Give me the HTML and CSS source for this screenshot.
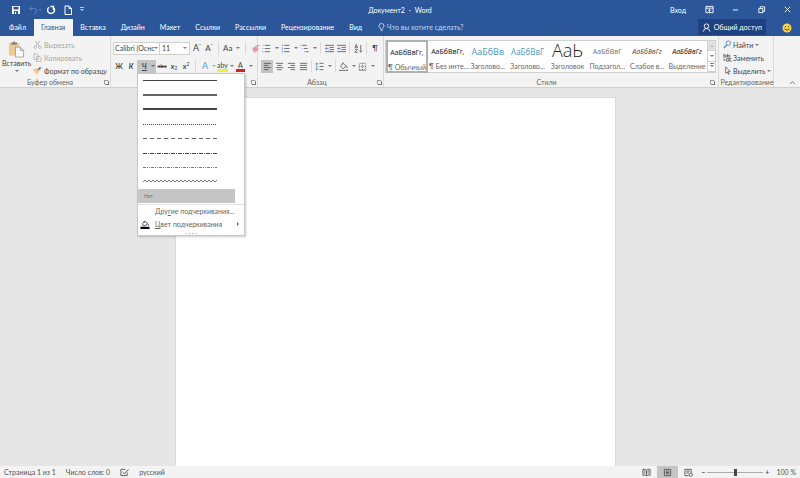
FILE: index.html
```html
<!DOCTYPE html>
<html lang="ru">
<head>
    <meta charset="UTF-8">
    <meta name="viewport" content="width=device-width, initial-scale=1.0">
    <title>Документ2 - Word</title>
    <link rel="stylesheet" href="styles.css">
</head>
<body>
    <header class="titlebar">
        <div class="quick">
            <button aria-label="Сохранить"><svg viewBox="0 0 10 10"><path fill="#fff" stroke="none" d="M1 1h8v8H1z"/><path fill="#2b579a" stroke="none" d="M2.500 1.800h5v2.700h-5zM3 6h4v3H3z"/><path fill="#fff" stroke="none" d="M4 7h1.200v2H4z"/></svg></button>
            <button class="dim" aria-label="Отменить"><svg viewBox="0 0 10 10"><path d="M4 1L1.500 3.500 4 6M1.500 3.500H6q2.500 0 2.500 2.500T6 8.500"/></svg><i class="arrow"></i></button>
            <button aria-label="Повторить"><svg viewBox="0 0 10 10"><path stroke-width="1.400" d="M3 2.200A3.500 3.500 0 1 0 7.500 2.500M7.500 5V1.500H4.500"/></svg></button>
            <button aria-label="Создать"><svg viewBox="0 0 10 10"><path d="M2 1h4l2.500 2.500V9.500H2zM6 1v2.500h2.500"/></svg></button>
            <button aria-label="Настройка панели"><i class="arrow bar"></i></button>
        </div>
        <div class="title">Документ2 &nbsp;- &nbsp;Word</div>
        <div class="window">
            <a href="#">Вход</a>
            <button aria-label="Параметры ленты"><svg viewBox="0 0 10 10"><path d="M1 1.500h8v7H1zM1 3.500h8M5 8V5M3.500 6.300L5 4.800l1.500 1.500"/></svg></button>
            <button aria-label="Свернуть"><svg viewBox="0 0 10 10"><path d="M2 5.500h6"/></svg></button>
            <button aria-label="Восстановить"><svg viewBox="0 0 10 10"><path d="M2 4h4.500v4.500H2zM3.500 4V2H8.500v5H6.500"/></svg></button>
            <button aria-label="Закрыть"><svg viewBox="0 0 10 10"><path d="M2 2l6 6M8 2L2 8"/></svg></button>
        </div>
    </header>

    <nav class="tabs">
        <a href="#">Файл</a>
        <a href="#" class="active">Главная</a>
        <a href="#">Вставка</a>
        <a href="#">Дизайн</a>
        <a href="#">Макет</a>
        <a href="#">Ссылки</a>
        <a href="#">Рассылки</a>
        <a href="#">Рецензирование</a>
        <a href="#">Вид</a>
        <a href="#" class="tell"><svg viewBox="0 0 10 10"><path d="M4 7C4 5.500 2.200 5 2.200 3.300a2.800 2.800 0 0 1 5.600 0C7.800 5 6 5.500 6 7zM4 8.500h2"/></svg>Что вы хотите сделать?</a>
        <button class="share"><svg viewBox="0 0 10 10"><circle cx="5" cy="3.500" r="2.500"/><path d="M1.500 9.500Q2 6 5 6t4 3.500"/></svg>Общий доступ</button>
        <button class="smile" aria-label="Отзыв"><svg viewBox="0 0 10 10"><circle cx="5" cy="5" r="4.500" fill="#fbd04b" stroke="none"/><path stroke="#6b4e12" d="M3.500 3v1.300M6.500 3v1.300M2.500 5.800q2.500 3 5 0"/></svg></button>
    </nav>

    <section class="ribbon">
        <div class="group clipboard">
            <div class="tools">
                <button class="paste"><svg viewBox="0 0 18 18"><path fill="#ecc277" stroke="none" d="M1 2.500h11V16H1z"/><path fill="#666" stroke="none" d="M3.500 2h1.800Q6.500-.5 7.700 2h1.800v2.500h-6z"/><path fill="#fff" stroke="#777" stroke-width=".8" d="M8 7h5l3.500 3.500v7H8zM13 7v3.500h3.500"/></svg>Вставить<i class="arrow"></i></button>
                <div class="stack">
                    <button class="off"><svg viewBox="0 0 10 10"><path d="M2.500 1l4.500 6M7.500 1L3 7"/><circle cx="2.500" cy="8" r="1.400"/><circle cx="7.500" cy="8" r="1.400"/></svg>Вырезать</button>
                    <button class="off"><svg viewBox="0 0 10 10"><path d="M1 1h3.500l1.500 1.500V7H1zM4 4h3.500L9 5.500v4H4z"/></svg>Копировать</button>
                    <button><svg viewBox="0 0 10 10"><path fill="#ecc277" stroke="none" d="M0 4l4-1.500 3 3.500-3 4z"/><path stroke="#555" stroke-width="2" d="M5.500 4.500L8.500 1.500"/></svg>Формат по образцу</button>
                </div>
            </div>
            <div class="caption">Буфер обмена<i class="launch"></i></div>
        </div>

        <div class="group font">
            <div class="tools rows">
                <div class="row">
                    <button class="combo name">Calibri (Оснс<i class="arrow"></i></button>
                    <button class="combo size">11<i class="arrow"></i></button>
                    <button class="tool letter">A<sup>ˆ</sup></button>
                    <button class="tool letter small">A<sup>ˇ</sup></button>
                    <i class="sep"></i>
                    <button class="split case">Aa<i class="arrow"></i></button>
                    <i class="sep"></i>
                    <button class="tool" aria-label="Очистить формат"><svg viewBox="0 0 10 10"><path fill="#e58f9b" stroke="none" d="M1 6l4-4 4 3-4 4.500H3.500z"/><path stroke="#a66" d="M3 4l3.500 3.500M6 1l1.500 2L9 1"/></svg></button>
                </div>
                <div class="row">
                    <button class="tool"><b>Ж</b></button>
                    <button class="tool"><b><em>К</em></b></button>
                    <div class="underline">
                        <button class="split pressed"><b><u>Ч</u></b><i class="arrow"></i></button>
                        <div class="menu">
                            <div class="lines">
                                <button aria-label="Сплошная"><svg viewBox="0 0 74 4"><path d="M0 1.500h74"/></svg></button>
                                <button aria-label="Двойная"><svg viewBox="0 0 74 4"><path stroke-width="2" stroke="#666" d="M0 2h74"/></svg></button>
                                <button aria-label="Толстая"><svg viewBox="0 0 74 4"><path stroke-width="2" d="M0 2h74"/></svg></button>
                                <button aria-label="Пунктир точками"><svg viewBox="0 0 74 4"><path stroke-dasharray="1 1" d="M0 2.500h74"/></svg></button>
                                <button aria-label="Пунктир"><svg viewBox="0 0 74 4"><path stroke="#666" stroke-dasharray="4 3" d="M0 2.500h74"/></svg></button>
                                <button aria-label="Точка-тире"><svg viewBox="0 0 74 4"><path stroke-dasharray="4 1 1 1" d="M0 2.500h74"/></svg></button>
                                <button aria-label="Две точки-тире"><svg viewBox="0 0 74 4"><path stroke="#777" stroke-dasharray="3 1 1 1 1 1" d="M0 2.500h74"/></svg></button>
                                <button aria-label="Волнистая"><svg viewBox="0 0 74 4"><path id="wave" stroke="#777" d=""/></svg></button>
                            </div>
                            <button class="none">Нет</button>
                            <button class="entry">Дру<u>г</u>ие подчеркивания...</button>
                            <button class="entry"><svg viewBox="0 0 10 10"><path d="M2 4l3-2.500L8 4 5 6.500H3zM4 3V1M8 4q1 1 .5 2.500"/><path fill="#000" stroke="none" d="M0 7.500h10V10H0z"/></svg><u>Ц</u>вет подчеркивания<i class="sub"></i></button>
                            <div class="grip">· · · ·</div>
                        </div>
                    </div>
                    <button class="tool tiny"><s>abc</s></button>
                    <button class="tool"><b>x</b><sub>2</sub></button>
                    <button class="tool"><b>x</b><sup>2</sup></button>
                    <i class="sep"></i>
                    <button class="split effect" aria-label="Эффекты">A<i class="arrow"></i></button>
                    <button class="split mark" aria-label="Цвет выделения"><span>aby</span><i class="arrow"></i></button>
                    <button class="split color" aria-label="Цвет текста"><span>A</span><i class="arrow"></i></button>
                </div>
            </div>
            <div class="caption">Шрифт<i class="launch"></i></div>
        </div>

        <div class="group para">
            <div class="tools rows">
                <div class="row">
                    <button class="split" aria-label="Маркеры"><svg viewBox="0 0 10 10"><path d="M3 1.500h6M3 5h6M3 8.500h6"/><path stroke="#4472c4" d="M.5 1.500h1M.5 5h1M.5 8.500h1"/></svg><i class="arrow"></i></button>
                    <button class="split" aria-label="Нумерация"><svg viewBox="0 0 10 10"><path d="M3.500 1.500h6M3.500 5h6M3.500 8.500h6"/><path stroke="#4472c4" d="M1.500.5v2M1.500 4v2M1.500 7.500v2"/></svg><i class="arrow"></i></button>
                    <button class="split" aria-label="Многоуровневый список"><svg viewBox="0 0 10 10"><path d="M2.500 1.500h5M4.500 5h4M6.500 8.500h3"/><path stroke="#4472c4" d="M.5 1.500h1M2.500 5h1M4.500 8.500h1"/></svg><i class="arrow"></i></button>
                    <i class="sep"></i>
                    <button class="tool" aria-label="Уменьшить отступ"><svg viewBox="0 0 10 10"><path d="M0 1.500h10M5 3.800h5M5 6.200h5M0 8.500h10"/><path stroke="#4472c4" d="M4 5H.5M2 3.500L.5 5 2 6.500"/></svg></button>
                    <button class="tool" aria-label="Увеличить отступ"><svg viewBox="0 0 10 10"><path d="M0 1.500h10M5 3.800h5M5 6.200h5M0 8.500h10"/><path stroke="#4472c4" d="M0 5h3.500M2 3.500L3.500 5 2 6.500"/></svg></button>
                    <i class="sep"></i>
                    <button class="tool" aria-label="Сортировка"><svg viewBox="0 0 10 10"><path d="M7.500 1v8M6 7.500L7.500 9 9 7.500M1 4.500l1.500-4 1.500 4M1.500 3.500h2M1 5.800h3L1 9.300h3"/></svg></button>
                    <i class="sep"></i>
                    <button class="tool small">¶</button>
                </div>
                <div class="row">
                    <button class="tool pressed" aria-label="По левому краю"><svg viewBox="0 0 10 10"><path d="M1 1.500h8M1 3.800h5M1 6.200h8M1 8.500h5"/></svg></button>
                    <button class="tool" aria-label="По центру"><svg viewBox="0 0 10 10"><path d="M1 1.500h8M2.500 3.800h5M1 6.200h8M2.500 8.500h5"/></svg></button>
                    <button class="tool" aria-label="По правому краю"><svg viewBox="0 0 10 10"><path d="M1 1.500h8M4 3.800h5M1 6.200h8M4 8.500h5"/></svg></button>
                    <button class="tool" aria-label="По ширине"><svg viewBox="0 0 10 10"><path d="M1 1.500h8M1 3.800h8M1 6.200h8M1 8.500h8"/></svg></button>
                    <i class="sep"></i>
                    <button class="split" aria-label="Интервал"><svg viewBox="0 0 10 10"><path d="M5 1.500h4.500M5 5h4.500M5 8.500h4.500"/><path stroke="#4472c4" d="M2 1v8M.5 2.500L2 1l1.500 1.500M.5 7.500L2 9l1.500-1.500"/></svg><i class="arrow"></i></button>
                    <i class="sep"></i>
                    <button class="split" aria-label="Заливка"><svg viewBox="0 0 10 10"><path d="M1.500 4.500L5 1.500l3 3-3.500 3zM4 3V.5M8 4.500q1.500 1 1 2.500M0 9.300h10V8"/></svg><i class="arrow"></i></button>
                    <button class="split" aria-label="Границы"><svg viewBox="0 0 10 10"><path stroke-dasharray="1 1" d="M1.500 9V1.500h7V9M5 1.500V9M1.500 5h7"/><path d="M1 9h8"/></svg><i class="arrow"></i></button>
                </div>
            </div>
            <div class="caption">Абзац<i class="launch"></i></div>
        </div>

        <div class="group styles">
            <div class="tools">
                <div class="gallery">
                    <button class="style chosen"><span class="sample">АаБбВвГг,</span><span>¶ Обычный</span></button>
                    <button class="style"><span class="sample">АаБбВвГг,</span><span>¶ Без инте...</span></button>
                    <button class="style"><span class="sample h1">АаБбВв</span><span>Заголово...</span></button>
                    <button class="style"><span class="sample h2">АаБбВвГ</span><span>Заголово...</span></button>
                    <button class="style"><span class="sample big">АаЬ</span><span>Заголовок</span></button>
                    <button class="style"><span class="sample soft">АаБбВвГ</span><span>Подзагол...</span></button>
                    <button class="style"><span class="sample slim">АаБбВвГг</span><span>Слабое в...</span></button>
                    <button class="style"><span class="sample ital">АаБбВвГг</span><span>Выделение</span></button>
                    <div class="scroll">
                        <button class="up" aria-label="Вверх"><i class="arrow"></i></button>
                        <button aria-label="Вниз"><i class="arrow"></i></button>
                        <button aria-label="Все стили"><i class="arrow bar"></i></button>
                    </div>
                </div>
            </div>
            <div class="caption">Стили<i class="launch"></i></div>
        </div>

        <div class="group edit">
            <div class="tools">
                <div class="stack">
                    <button><svg viewBox="0 0 10 10"><circle cx="6" cy="3.500" r="2.500" stroke="#3a70b8"/><path stroke="#3a70b8" stroke-width="1.600" d="M4.200 5.500L1 9"/></svg>Найти<i class="arrow"></i></button>
                    <button><svg viewBox="0 0 10 10"><path d="M1 1v3.500h2.500V2.500H1M5 1v3.500h2.500V2.500H5M4 6h2.500v3H4zM9.500 6H7.500v3h2M1 6v2h2"/></svg>Заменить</button>
                    <button><svg viewBox="0 0 10 10"><path fill="#fff" d="M3 1v7l1.800-1.500L6 9.300l1-.5-1.200-2.700H8z"/></svg>Выделить<i class="arrow"></i></button>
                </div>
            </div>
            <div class="caption">Редактирование</div>
        </div>
        <button class="collapse" aria-label="Свернуть ленту"><svg viewBox="0 0 10 10"><path d="M2.500 6.500L5 4l2.500 2.500"/></svg></button>
    </section>

    <main class="workspace">
        <div class="page"></div>
    </main>

    <footer class="status">
        <span>Страница 1 из 1</span>
        <span>Число слов: 0</span>
        <button aria-label="Правописание"><svg viewBox="0 0 10 10"><path d="M8 5v3.500H1v-7h5M3 4.500L5 6.500 9.500 1.500"/></svg></button>
        <span>русский</span>
        <div class="views">
            <button aria-label="Чтение"><svg viewBox="0 0 10 10"><path d="M5 2.500v6M1 1.500h3l1 1 1-1h3V8H6L5 9 4 8H1zM2 3.500h2M2 5.500h2M6 3.500h2M6 5.500h2"/></svg></button>
            <button class="on" aria-label="Разметка страницы"><svg viewBox="0 0 10 10"><path d="M1.500 1.500h7v7h-7zM3 3.500h4M3 5h4M3 6.500h4"/></svg></button>
            <button aria-label="Веб-документ"><svg viewBox="0 0 10 10"><path d="M1 1.500h7v4M1 1.500v7h4M2.500 3.500h4M2.500 5.500h3"/><circle cx="7.500" cy="7.500" r="1.800"/></svg></button>
        </div>
        <label class="zoom"><b>−</b><input type="range" min="0" max="100" value="50" aria-label="Масштаб"><b>+</b></label>
        <span class="percent">100 %</span>
    </footer>

    <script>
        // зигзаг для волнистого подчеркивания
        let d = 'M0 3';
        for (let x = 2; x <= 74; x += 2) {
            d += ' L' + x + ' ' + (x % 4 ? 1 : 3);
        }
        document.getElementById('wave').setAttribute('d', d);
    </script>
</body>
</html>
```
FILE: styles.css
```css
* {
    box-sizing: border-box;
}
body {
    display: flex;
    flex-direction: column;
    min-height: 100vh;
    margin: 0;
    font-family: Lato, "Noto Sans", sans-serif;
    font-size: 7px;
    line-height: 10px;
    color: #444;
    background: #e6e6e6;
}
button {
    display: flex;
    align-items: center;
    padding: 0;
    border: 0;
    background: none;
    font: inherit;
    color: inherit;
    white-space: nowrap;
}
a {
    color: inherit;
    text-decoration: none;
    white-space: nowrap;
}
svg {
    flex: none;
    width: 9px;
    height: 9px;
    fill: none;
    stroke: currentColor;
}
.arrow {
    flex: none;
    border: 2px solid transparent;
    border-top-color: currentColor;
    border-bottom: 0;
}
.arrow.bar {
    position: relative;
}
.arrow.bar::before {
    content: "";
    position: absolute;
    left: -2px;
    top: -4px;
    width: 4px;
    height: 1px;
    background: currentColor;
}

/* Заголовок окна */
.titlebar {
    display: grid;
    grid-template-columns: 1fr auto 1fr;
    align-items: center;
    height: 19px;
    color: #fff;
    background: #2b579a;
}
.quick {
    display: flex;
    gap: 7px;
    padding-left: 11px;
}
.quick svg {
    width: 10px;
    height: 10px;
}
.quick .arrow {
    opacity: 0.7;
}
.quick .dim {
    color: #5b7fb8;
    margin-right: -3px;
}
.window {
    display: flex;
    align-items: center;
    justify-content: flex-end;
    gap: 17px;
    padding-right: 8px;
}
.window a {
    margin-right: 2px;
}

/* Вкладки */
.tabs {
    display: flex;
    height: 17px;
    padding-left: 2px;
    color: #fff;
    background: #2b579a;
}
.tabs a {
    padding: 0 8px 0 7px;
    line-height: 17px;
}
.tabs .active {
    color: #2b579a;
    background: #f3f3f3;
}
.tabs .tell {
    display: flex;
    align-items: center;
    gap: 1px;
    color: #c8d6ec;
}
.share {
    gap: 3px;
    height: 16px;
    margin-left: auto;
    padding: 0 4px;
    background: #1e4280;
}
.smile {
    padding: 0 8px 0 16px;
}
.smile svg {
    width: 10px;
    height: 10px;
}

/* Лента */
.ribbon {
    display: flex;
    height: 52px;
    background: #f3f3f3;
    border-bottom: 1px solid #d0d0d0;
}
.ribbon svg {
    opacity: 0.8;
}
.ribbon .arrow {
    opacity: 0.7;
}
.group {
    display: flex;
    flex: none;
    flex-direction: column;
    border-right: 1px solid #dadada;
}
.tools {
    display: flex;
    flex: 1;
    align-items: flex-start;
}
.caption {
    position: relative;
    height: 10px;
    text-align: center;
    color: #666;
}
.launch {
    position: absolute;
    right: 2px;
    top: 3px;
    width: 4px;
    height: 4px;
    border: 1px solid #999;
    border-width: 1px 0 0 1px;
}
.launch::after {
    content: "";
    position: absolute;
    right: -1px;
    bottom: -1px;
    width: 3px;
    height: 3px;
    border: 1px solid #777;
    border-width: 0 1px 1px 0;
}
.clipboard {
    width: 111px;
}
.clipboard .caption {
    padding-right: 10px;
}
.paste {
    flex-direction: column;
    width: 33px;
    padding-top: 4px;
}
.paste svg {
    width: 17px;
    height: 18px;
}
.paste .arrow {
    margin-top: 2px;
}
.stack {
    display: flex;
    flex-direction: column;
    padding-top: 2px;
}
.stack button {
    gap: 2px;
    height: 13px;
}
.stack .arrow {
    margin-left: 1px;
}
.off {
    color: #a6a6a6;
}
.rows {
    flex-direction: column;
    padding-top: 5px;
    gap: 4px;
}
.row {
    display: flex;
    align-items: center;
    height: 14px;
}
.tool {
    justify-content: center;
    width: 12px;
    height: 13px;
}
.split {
    gap: 4px;
    width: 19px;
    height: 13px;
    padding-left: 1px;
}
.pressed {
    background: #c5c5c5;
}
.sep {
    width: 1px;
    height: 12px;
    margin: 0 2px;
    background: #dadada;
}
.font {
    width: 147px;
    padding-left: 2px;
}
.font .sep {
    margin: 0 3px;
}
.combo {
    justify-content: space-between;
    height: 13px;
    padding: 0 2px;
    border: 1px solid #d0d0d0;
    background: #fff;
}
.name {
    width: 47px;
    padding: 0 1px;
}
.size {
    width: 30px;
    margin-right: 1px;
    border-left: 0;
}
.case {
    width: 20px;
    font-size: 8px;
}
.letter {
    font-size: 9px;
}
.small {
    font-size: 8px;
}
.tool sup,
.tool sub {
    font-size: 5px;
    line-height: 5px;
}
.tool sup {
    margin-bottom: 3px;
}
.tool sub {
    margin-top: 4px;
}
.tiny {
    font-size: 6px;
}
.underline {
    position: relative;
}
.underline .split {
    padding-left: 5px;
}
.effect {
    width: 17px;
    padding-left: 3px;
    color: #5b9bd5;
    font-size: 9px;
}
.mark {
    gap: 2px;
}
.mark span {
    border-bottom: 3px solid #f5ee30;
    line-height: 8px;
}
.color span {
    padding: 0 2px;
    border-bottom: 3px solid #d8222a;
    line-height: 8px;
}

/* Меню подчеркивания */
.menu {
    position: absolute;
    z-index: 2;
    top: 100%;
    left: 0;
    width: 108px;
    border: 1px solid #c6c6c6;
    background: #fff;
    box-shadow: 1px 1px 2px rgba(0, 0, 0, 0.2);
}
.lines {
    display: flex;
    flex-direction: column;
    height: 115px;
    color: #444;
}
.lines button {
    flex: 1;
    padding-left: 5px;
}
.lines svg {
    width: 74px;
    height: 4px;
    opacity: 1;
}
.none {
    width: 97px;
    height: 14px;
    margin-bottom: 1px;
    padding-left: 6px;
    font-size: 5px;
    color: #777;
    background: #c5c5c5;
}
.entry {
    width: 100%;
    height: 13px;
    padding: 0 5px 0 17px;
    color: #666;
}
.none + .entry {
    height: 14px;
    border-top: 1px solid #e1e1e1;
}
.entry svg {
    margin: 0 5px 0 -15px;
    width: 10px;
    color: #444;
    opacity: 1;
}
.sub {
    margin-left: auto;
    border: 2px solid transparent;
    border-left-color: #666;
    border-right: 0;
}
.grip {
    height: 4px;
    line-height: 4px;
    text-align: center;
    color: #999;
}

.para {
    width: 126px;
    padding-left: 3px;
}
.para .caption {
    padding-right: 10px;
}

/* Стили */
.styles {
    flex: 1;
    min-width: 0;
    padding: 0 2px 0 1px;
}
.styles .tools {
    padding-top: 4px;
}
.styles .caption {
    padding-right: 8px;
}
.gallery {
    display: flex;
    flex: 1;
    height: 33px;
    min-width: 0;
    border: 1px solid #d0d0d0;
    background: #fff;
}
.style {
    flex: 1 1 0;
    flex-direction: column;
    align-items: stretch;
    min-width: 0;
    padding: 0 1px;
    color: #666;
}
.chosen {
    border: 2px solid #b0b0b0;
    margin: -1px 0;
    padding: 0;
}
.sample {
    height: 20px;
    line-height: 22px;
    font-family: "Noto Sans", sans-serif;
    color: #222;
}
.sample.h1 {
    font-size: 9px;
    color: #5b9fc0;
}
.sample.h2 {
    font-size: 8px;
    color: #5b9fc0;
}
.sample.big {
    font-family: "Open Sans", sans-serif;
    font-size: 18px;
    line-height: 18px;
    font-weight: 300;
}
.sample.soft {
    color: #777;
}
.sample.slim {
    font-style: italic;
    color: #555;
}
.sample.ital {
    font-style: italic;
}
.scroll {
    display: flex;
    flex-direction: column;
    width: 8px;
    border-left: 1px solid #d0d0d0;
}
.scroll button {
    flex: 1;
    justify-content: center;
    border-bottom: 1px solid #d0d0d0;
}
.scroll .up {
    color: #aaa;
    background: #e1e1e1;
}
.up .arrow {
    transform: rotate(180deg);
}
.edit {
    width: 55px;
    padding: 0 2px 0 4px;
}
.edit .caption {
    margin: 0 -3px;
}
.edit .stack button {
    gap: 1px;
}
.collapse {
    align-self: flex-end;
    justify-content: flex-end;
    width: 26px;
    padding-right: 3px;
}

/* Документ */
.workspace {
    display: flex;
    flex: 1;
    justify-content: center;
    padding: 9px 9px 0 0;
}
.page {
    width: 441px;
    max-width: 100%;
    background: #fff;
    border: 1px solid #dadada;
    border-width: 1px 1px 0;
}

/* Строка состояния */
.status {
    display: flex;
    align-items: center;
    height: 12px;
    padding: 0 4px;
    gap: 10px;
    color: #555;
    background: #f3f3f3;
}
.status svg {
    width: 9px;
    height: 9px;
}
.views {
    display: flex;
    margin-left: auto;
}
.views button {
    justify-content: center;
    width: 21px;
    height: 12px;
}
.views .on {
    background: #c5c5c5;
}
.zoom {
    display: flex;
    align-items: center;
    gap: 2px;
    margin-left: -8px;
}
.zoom input {
    appearance: none;
    width: 56px;
    height: 8px;
    margin: 0;
    background: linear-gradient(#aaa, #aaa) center / 100% 1px no-repeat;
}
.zoom input::-webkit-slider-thumb {
    appearance: none;
    width: 3px;
    height: 7px;
    background: #444;
}
.percent {
    margin-left: -3px;
}
```
